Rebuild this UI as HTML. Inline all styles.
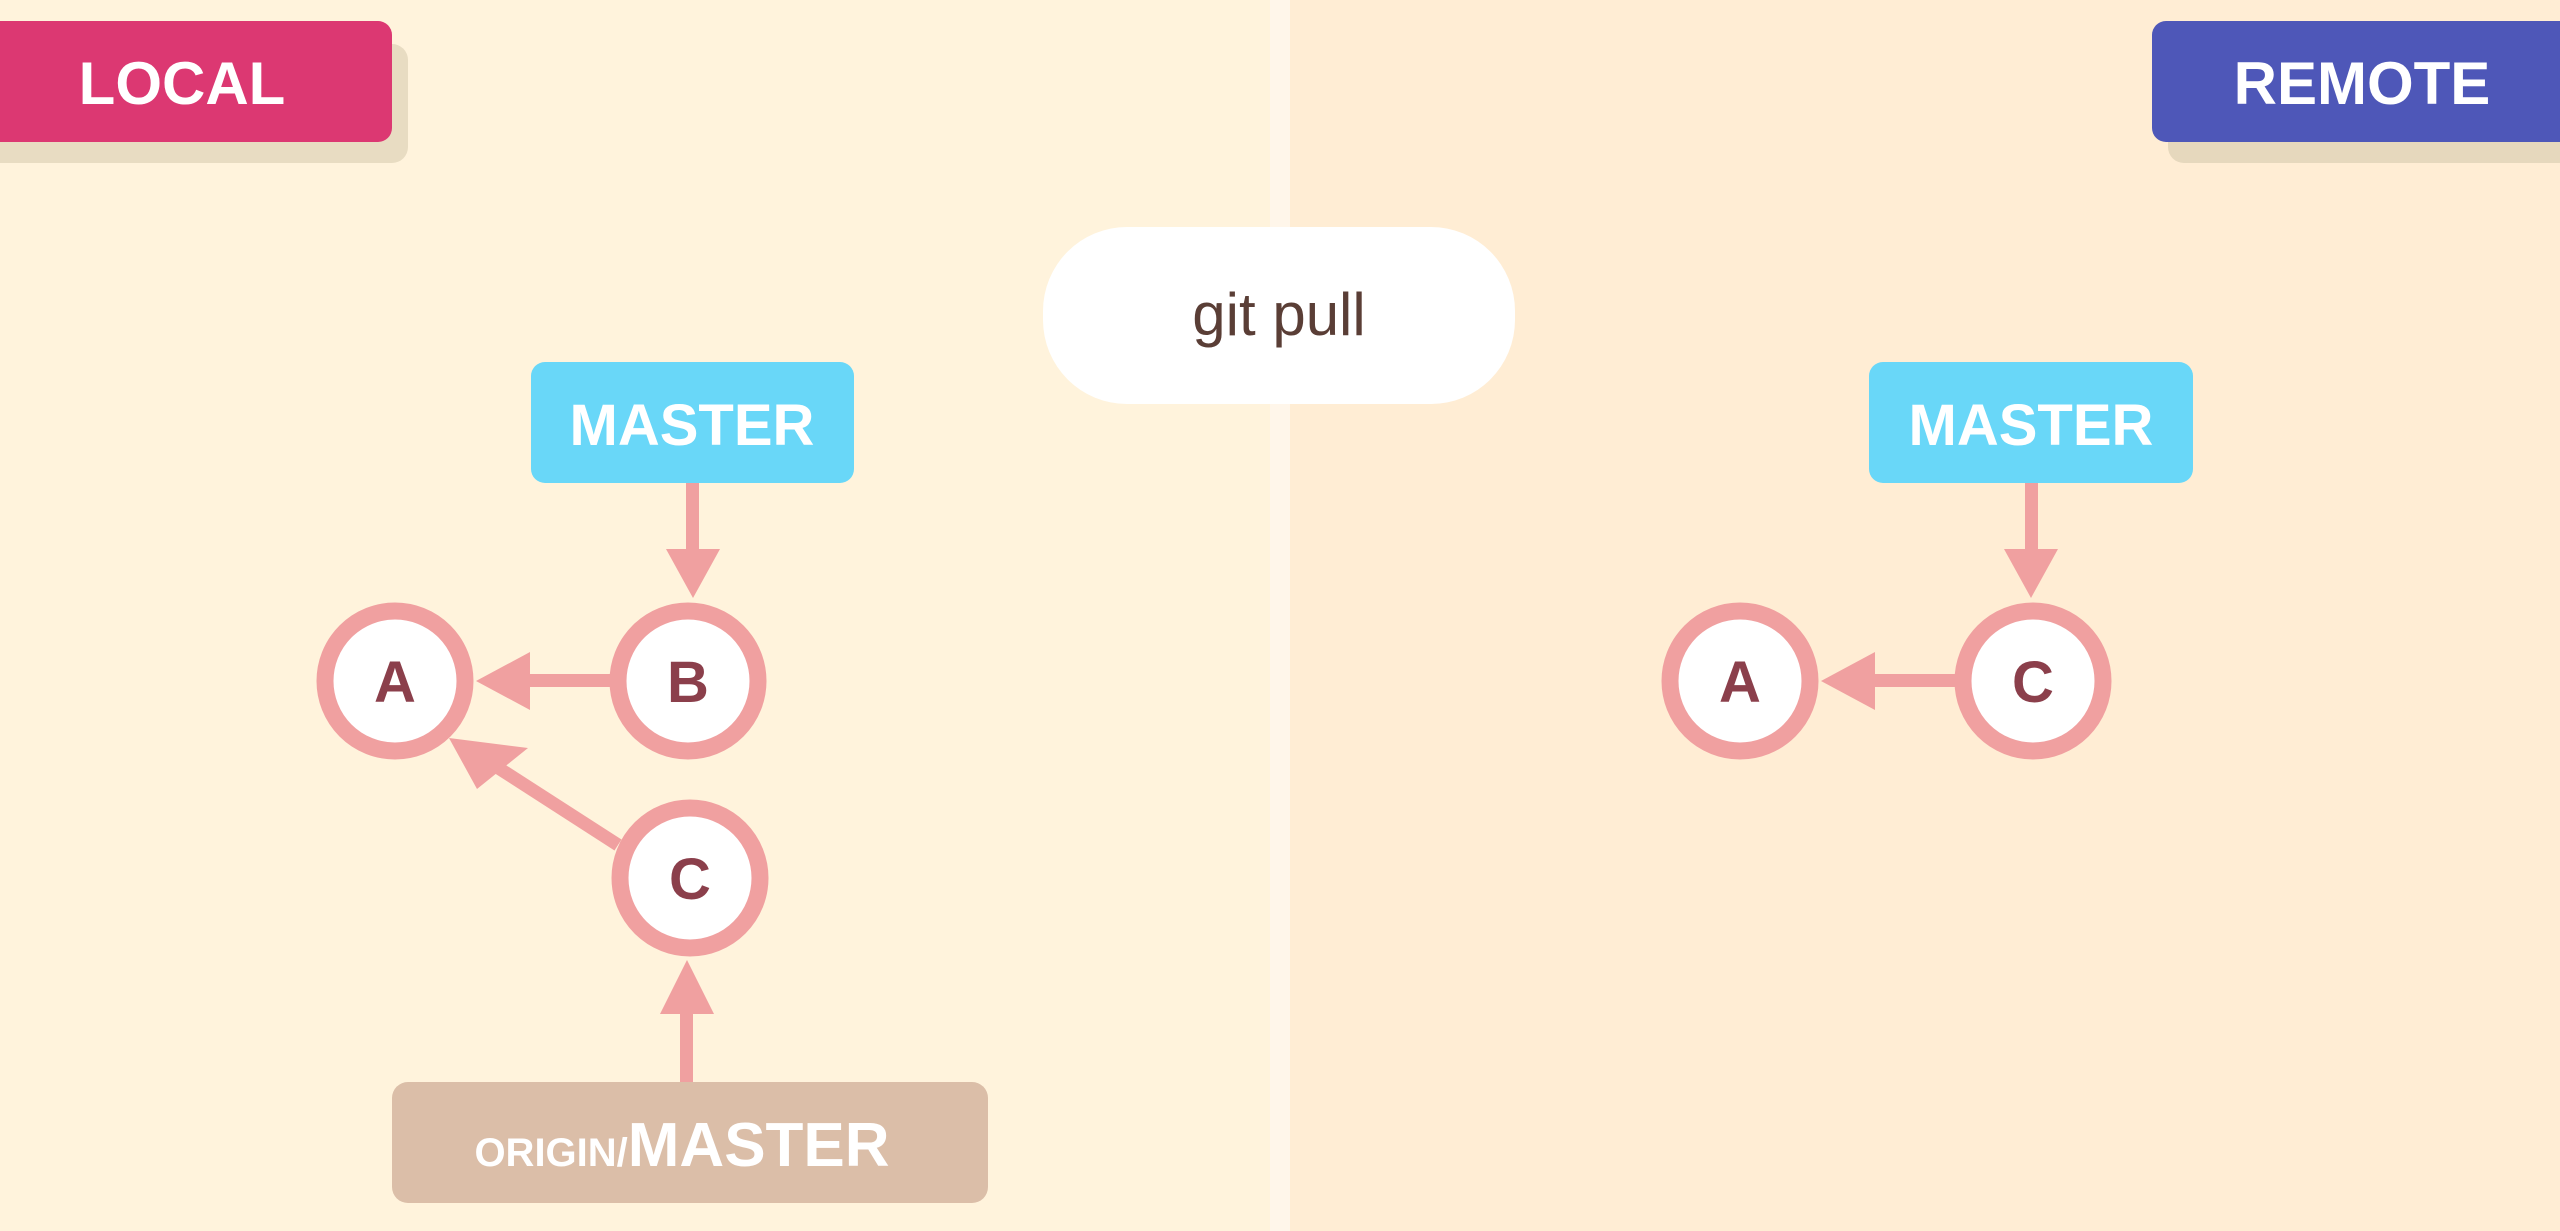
<!DOCTYPE html>
<html><head><meta charset="utf-8"><style>
html,body{margin:0;padding:0;width:2560px;height:1231px;overflow:hidden;background:#fff3dc}
svg{display:block}
text{font-family:"Liberation Sans",sans-serif;font-weight:bold}
</style></head><body>
<svg width="2560" height="1231" viewBox="0 0 2560 1231">
<rect x="0" y="0" width="1270" height="1231" fill="#fff3dc"/>
<rect x="1290" y="0" width="1270" height="1231" fill="#ffedd4"/>
<rect x="1270" y="0" width="20" height="1231" fill="#fff6ea"/>

<!-- LOCAL -->
<rect x="-20" y="44" width="428" height="119" rx="16" fill="#e8dcc2"/>
<rect x="-20" y="21" width="412" height="121" rx="14" fill="#dc3872"/>
<text x="182" y="104" font-size="60" fill="#fff" text-anchor="middle">LOCAL</text>

<!-- REMOTE -->
<rect x="2168" y="44" width="420" height="119" rx="16" fill="#e6d8bd"/>
<rect x="2152" y="21" width="430" height="121" rx="14" fill="#4e57b8"/>
<text x="2362" y="104" font-size="60" fill="#fff" text-anchor="middle">REMOTE</text>

<!-- git pull -->
<rect x="1043" y="227" width="472" height="177" rx="84" fill="#fff"/>
<text x="1279" y="335" font-size="60" fill="#5a3e36" text-anchor="middle" style="font-weight:normal">git pull</text>

<!-- left MASTER -->
<rect x="531" y="362" width="323" height="121" rx="14" fill="#69d7f8"/>
<text x="692" y="445" font-size="58" fill="#fff" text-anchor="middle">MASTER</text>
<rect x="686" y="483" width="13" height="68" fill="#f0a0a0"/>
<polygon points="666,549 720,549 693,598" fill="#f0a0a0"/>

<!-- B -> A -->
<rect x="528" y="674" width="84" height="13" fill="#f0a0a0"/>
<polygon points="476,681 530,652 530,710" fill="#f0a0a0"/>
<!-- C -> A -->
<line x1="618" y1="845" x2="486" y2="760" stroke="#f0a0a0" stroke-width="13"/>
<polygon points="449,738 528,748 477,789" fill="#f0a0a0"/>
<!-- origin -> C -->
<rect x="680" y="1010" width="13" height="72" fill="#f0a0a0"/>
<polygon points="660,1014 714,1014 687,960" fill="#f0a0a0"/>

<!-- circles -->
<g fill="#fff" stroke="#f0a0a0" stroke-width="17">
<circle cx="395" cy="681" r="70"/>
<circle cx="688" cy="681" r="70"/>
<circle cx="690" cy="878" r="70"/>
<circle cx="1740" cy="681" r="70"/>
<circle cx="2033" cy="681" r="70"/>
</g>
<g font-size="58" fill="#8b3f4b" text-anchor="middle" style="font-family:'DejaVu Sans',sans-serif">
<text x="395" y="702">A</text>
<text x="688" y="702">B</text>
<text x="690" y="899">C</text>
<text x="1740" y="702">A</text>
<text x="2033" y="702">C</text>
</g>

<!-- ORIGIN/MASTER -->
<rect x="392" y="1082" width="596" height="121" rx="16" fill="#dbbea8"/>
<text x="682" y="1166" fill="#fff" text-anchor="middle"><tspan font-size="40">ORIGIN/</tspan><tspan font-size="62">MASTER</tspan></text>

<!-- right MASTER -->
<rect x="1869" y="362" width="324" height="121" rx="14" fill="#69d7f8"/>
<text x="2031" y="445" font-size="58" fill="#fff" text-anchor="middle">MASTER</text>
<rect x="2025" y="483" width="13" height="68" fill="#f0a0a0"/>
<polygon points="2004,549 2058,549 2031,598" fill="#f0a0a0"/>
<!-- C -> A right -->
<rect x="1872" y="674" width="88" height="13" fill="#f0a0a0"/>
<polygon points="1821,681 1875,652 1875,710" fill="#f0a0a0"/>
</svg>
</body></html>
